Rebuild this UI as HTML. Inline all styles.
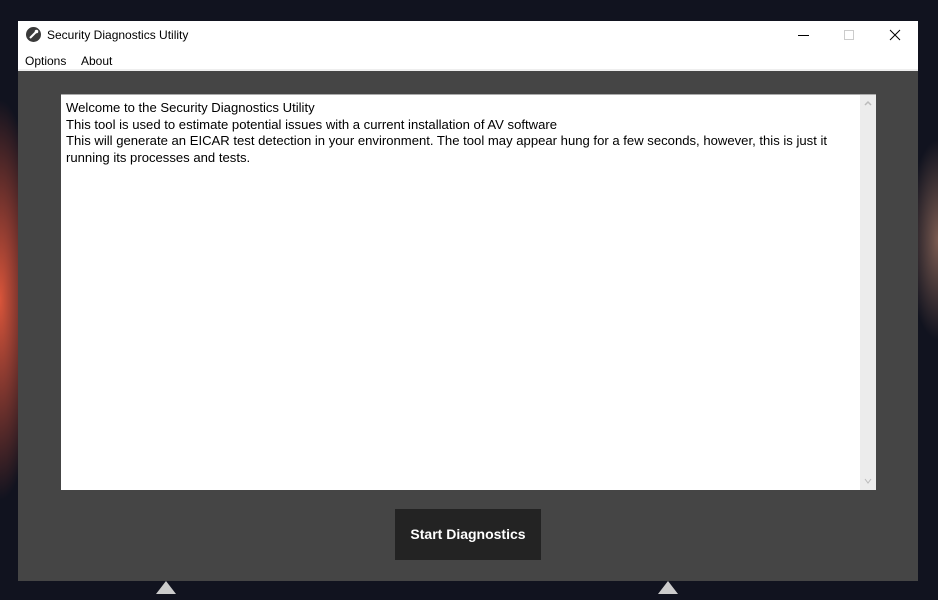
<!DOCTYPE html>
<html><head><style>
body{margin:0;width:938px;height:600px;overflow:hidden;position:relative;font-family:"Liberation Sans",sans-serif;
background:radial-gradient(ellipse 40px 200px at 0px 300px,#d9553a 0%,#8a3a30 40%,rgba(17,19,31,0) 100%),radial-gradient(ellipse 30px 100px at 938px 240px,#7a5a50 0%,rgba(17,19,31,0) 100%),#11131f;}
.win{position:absolute;left:18px;top:21px;width:900px;height:560px;background:#454545;}
.title{position:absolute;left:0;top:0;width:900px;height:27px;background:#fff;font-size:12px;}
.title .t{position:absolute;left:29px;top:7px;color:#000}
.icon{position:absolute;left:8px;top:6px;width:15px;height:15px;border-radius:50%;background:#3a3a3a}
.menu{position:absolute;left:0;top:27px;width:900px;height:21px;background:#fff;border-bottom:2px solid #eee;font-size:12px}
.menu span{position:absolute;top:6px}
.ta{position:absolute;left:43px;top:73px;width:815px;height:395px;background:#fff;border-top:1px solid #aaa}
.txt{position:absolute;left:5px;top:5px;font-size:13.1px;line-height:16.5px;color:#000;width:790px}
.sb{position:absolute;right:0;top:0;width:16px;height:395px;background:#ececec}
.btn{position:absolute;left:377px;top:488px;width:146px;height:51px;background:#232323;color:#fff;font-weight:bold;font-size:14px;text-align:center;line-height:51px}
.tri{position:absolute;top:581px;width:0;height:0;border-left:10px solid transparent;border-right:10px solid transparent;border-bottom:13px solid #ccc}
</style></head><body>
<div class="win">
<div class="title"><div class="icon"><svg width="15" height="15"><path d="M4 11 L10 5" stroke="#fff" stroke-width="2"/><circle cx="10.5" cy="4.5" r="1.8" fill="#fff"/></svg></div><span class="t">Security Diagnostics Utility</span>
<svg style="position:absolute;left:770px;top:8px" width="120" height="14"><line x1="10" y1="6.5" x2="21" y2="6.5" stroke="#000"/><rect x="56.5" y="1.5" width="9" height="9" fill="none" stroke="#ccc"/><path d="M102 1 L112 11 M112 1 L102 11" stroke="#000"/></svg></div>
<div class="menu"><span style="left:7px">Options</span><span style="left:63px">About</span></div>
<div class="ta"><div class="txt">Welcome to the Security Diagnostics Utility<br>This tool is used to estimate potential issues with a current installation of AV software<br>This will generate an EICAR test detection in your environment. The tool may appear hung for a few seconds, however, this is just it<br>running its processes and tests.</div>
<div class="sb"><svg width="16" height="395"><path d="M5 10 L8 7 L11 10" stroke="#bbb" fill="none" stroke-width="1.5"/><path d="M5 384 L8 388 L11 384" stroke="#bbb" fill="none"/></svg></div></div>
<div class="btn">Start Diagnostics</div>
</div>
<div class="tri" style="left:156px"></div><div class="tri" style="left:658px"></div>
</body></html>
